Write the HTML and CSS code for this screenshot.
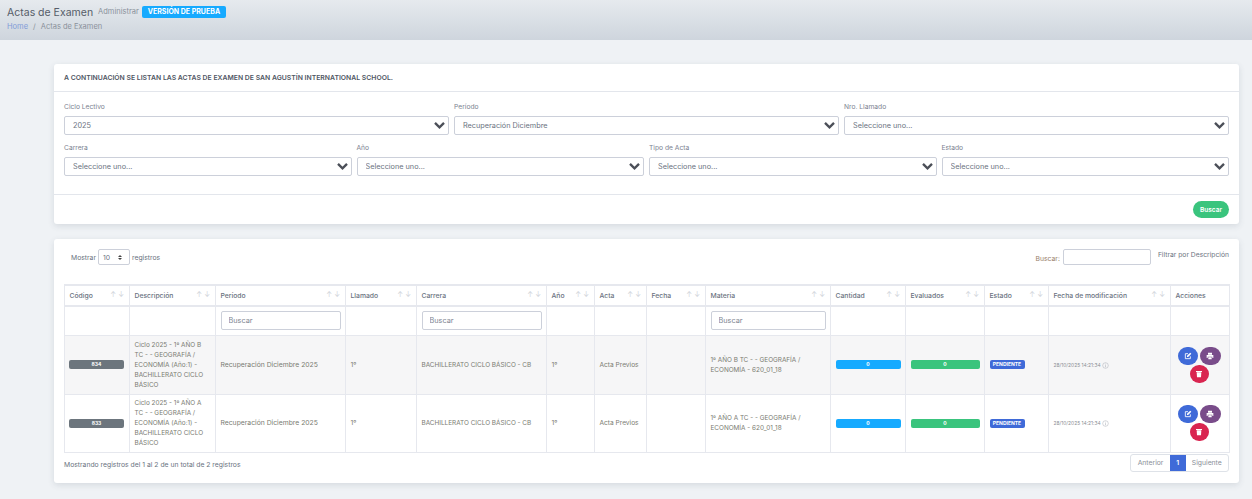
FILE: index.html
```html
<!DOCTYPE html>
<html lang="es">
<head>
<meta charset="utf-8">
<title>Actas de Examen</title>
<link rel="stylesheet" href="styles.css">
</head>
<body>
<svg class="sprite" width="0" height="0" aria-hidden="true">
  <symbol id="chev" viewBox="0 0 14 10"><path d="M2 2l5 5 5-5" fill="none" stroke="currentColor" stroke-width="2.6"/></symbol>
  <symbol id="edit" viewBox="0 0 12 12"><path d="M6 2.500H2v7.500h7.500V6.500" fill="none" stroke="currentColor" stroke-width="1.300"/><path d="M4.500 5.800L9.300 1l1.700 1.700-4.800 4.800H4.500z" fill="currentColor"/></symbol>
  <symbol id="print" viewBox="0 0 12 12"><path d="M3 1h6v3H3zM1 4.500h10V9H9.500V7h-7v2H1zM3.500 8h5v3h-5z" fill="currentColor"/></symbol>
  <symbol id="trash" viewBox="0 0 12 12"><path d="M1.500 1.500h9v1.500h-9zM2.500 3.500h7L9 11H3z" fill="currentColor"/></symbol>
  <symbol id="info" viewBox="0 0 10 10"><circle cx="5" cy="5" r="4" fill="none" stroke="currentColor" stroke-width=".7"/><path d="M5 4.500v3M5 2.500v1" stroke="currentColor" stroke-width=".8"/></symbol>
</svg>

<header class="topbar">
  <div class="title-row">
    <h1 class="title">Actas de Examen</h1>
    <span class="subtitle">Administrar</span>
    <span class="trial">VERSIÓN DE PRUEBA</span>
  </div>
  <nav class="crumbs"><a class="crumb-link">Home</a><span class="crumb-sep">/</span><span>Actas de Examen</span></nav>
</header>

<main class="content">
  <section class="card filters">
    <div class="card-head">A CONTINUACIÓN SE LISTAN LAS ACTAS DE EXAMEN DE SAN AGUSTÍN INTERNATIONAL SCHOOL.</div>
    <div class="card-body">
      <div class="grid-3">
        <label class="field"><span class="field-label">Ciclo Lectivo</span><span class="select-wrap"><select class="select"><option>2025</option></select><svg class="chev"><use href="#chev"/></svg></span></label>
        <label class="field"><span class="field-label">Período</span><span class="select-wrap"><select class="select"><option>Recuperación Diciembre</option></select><svg class="chev"><use href="#chev"/></svg></span></label>
        <label class="field"><span class="field-label">Nro. Llamado</span><span class="select-wrap"><select class="select"><option>Seleccione uno...</option></select><svg class="chev"><use href="#chev"/></svg></span></label>
      </div>
      <div class="grid-4">
        <label class="field"><span class="field-label">Carrera</span><span class="select-wrap"><select class="select"><option>Seleccione uno...</option></select><svg class="chev"><use href="#chev"/></svg></span></label>
        <label class="field"><span class="field-label">Año</span><span class="select-wrap"><select class="select"><option>Seleccione uno...</option></select><svg class="chev"><use href="#chev"/></svg></span></label>
        <label class="field"><span class="field-label">Tipo de Acta</span><span class="select-wrap"><select class="select"><option>Seleccione uno...</option></select><svg class="chev"><use href="#chev"/></svg></span></label>
        <label class="field"><span class="field-label">Estado</span><span class="select-wrap"><select class="select"><option>Seleccione uno...</option></select><svg class="chev"><use href="#chev"/></svg></span></label>
      </div>
    </div>
    <div class="card-foot"><button class="btn-search">Buscar</button></div>
  </section>

  <section class="card list">
    <div class="list-tools">
      <div class="length">Mostrar <span class="length-box">10<span class="spin"><i class="up"></i><i class="down"></i></span></span> registros</div>
      <div class="search-tools">
        <span class="search-label">Buscar:</span><input class="search-input" type="text" aria-label="Buscar">
        <span class="filter-note">Filtrar por Descripción</span>
      </div>
    </div>
    <table class="data">
      <colgroup>
        <col class="c1"><col class="c2"><col class="c3"><col class="c4"><col class="c5"><col class="c6"><col class="c7"><col class="c8"><col class="c9"><col class="c10"><col class="c11"><col class="c12"><col class="c13"><col class="c14">
      </colgroup>
      <thead>
        <tr class="head">
          <th>Código<span class="sort">↑↓</span></th>
          <th>Descripción<span class="sort">↑↓</span></th>
          <th>Período<span class="sort">↑↓</span></th>
          <th>Llamado<span class="sort">↑↓</span></th>
          <th>Carrera<span class="sort">↑↓</span></th>
          <th>Año<span class="sort">↑↓</span></th>
          <th>Acta<span class="sort">↑↓</span></th>
          <th>Fecha<span class="sort">↑↓</span></th>
          <th>Materia<span class="sort">↑↓</span></th>
          <th>Cantidad<span class="sort">↑↓</span></th>
          <th>Evaluados<span class="sort">↑↓</span></th>
          <th>Estado<span class="sort">↑↓</span></th>
          <th>Fecha de modificación<span class="sort">↑↓</span></th>
          <th>Acciones</th>
        </tr>
        <tr class="filter-row">
          <td></td><td></td>
          <td><input class="col-search" placeholder="Buscar"></td>
          <td></td>
          <td><input class="col-search" placeholder="Buscar"></td>
          <td></td><td></td><td></td>
          <td><input class="col-search" placeholder="Buscar"></td>
          <td></td><td></td><td></td><td></td><td></td>
        </tr>
      </thead>
      <tbody>
        <tr class="odd">
          <td><span class="badge grey">834</span></td>
          <td class="caps desc">Ciclo 2025 - 1º AÑO B TC - - GEOGRAFÍA / ECONOMÍA (Año:1) - BACHILLERATO CICLO BÁSICO</td>
          <td>Recuperación Diciembre 2025</td>
          <td>1º</td>
          <td class="caps">BACHILLERATO CICLO BÁSICO - CB</td>
          <td>1º</td>
          <td class="nowrap">Acta Previos</td>
          <td></td>
          <td class="caps">1º AÑO B TC - - GEOGRAFÍA / ECONOMÍA - 620_01_18</td>
          <td><span class="badge blue">0</span></td>
          <td><span class="badge green">0</span></td>
          <td><span class="badge state">PENDIENTE</span></td>
          <td class="stamp">28/10/2025 14:21:34 <svg class="info"><use href="#info"/></svg></td>
          <td class="actions"><span class="act edit"><svg><use href="#edit"/></svg></span><span class="act print"><svg><use href="#print"/></svg></span><span class="act del"><svg><use href="#trash"/></svg></span></td>
        </tr>
        <tr>
          <td><span class="badge grey">833</span></td>
          <td class="caps desc">Ciclo 2025 - 1º AÑO A TC - - GEOGRAFÍA / ECONOMÍA (Año:1) - BACHILLERATO CICLO BÁSICO</td>
          <td>Recuperación Diciembre 2025</td>
          <td>1º</td>
          <td class="caps">BACHILLERATO CICLO BÁSICO - CB</td>
          <td>1º</td>
          <td class="nowrap">Acta Previos</td>
          <td></td>
          <td class="caps">1º AÑO A TC - - GEOGRAFÍA / ECONOMÍA - 620_01_18</td>
          <td><span class="badge blue">0</span></td>
          <td><span class="badge green">0</span></td>
          <td><span class="badge state">PENDIENTE</span></td>
          <td class="stamp">28/10/2025 14:21:34 <svg class="info"><use href="#info"/></svg></td>
          <td class="actions"><span class="act edit"><svg><use href="#edit"/></svg></span><span class="act print"><svg><use href="#print"/></svg></span><span class="act del"><svg><use href="#trash"/></svg></span></td>
        </tr>
      </tbody>
    </table>
    <div class="list-foot">
      <div class="info-text">Mostrando registros del 1 al 2 de un total de 2 registros</div>
      <div class="pager"><span class="page">Anterior</span><span class="page current">1</span><span class="page">Siguiente</span></div>
    </div>
  </section>
</main>
</body>
</html>
```
FILE: styles.css
```css
* { box-sizing: border-box; }
html, body { margin: 0; height: 499px; overflow: hidden; }
body {
  background: #eff2f5;
  font-family: "Inter", "Open Sans", sans-serif;
  font-size: 7.500px;
  color: #6a7280;
}
.sprite { position: absolute; }

.topbar {
  height: 40px;
  background: linear-gradient(180deg, #e6eaee 0%, #ced5dd 100%);
  padding: 5px 7px 0;
}
.title-row { display: flex; align-items: center; height: 14px; gap: 5px; }
.title { margin: 0; font-size: 10.500px; font-weight: 400; color: #555c68; }
.subtitle { font-size: 7.500px; color: #8a919b; position: relative; top: -1px; }
.trial {
  background: #16aaff;
  color: #fff;
  font-size: 7px;
  font-weight: 700;
  padding: 0 6px;
  height: 12px;
  line-height: 12px;
  border-radius: 2px;
  margin-left: -2px;
}
.crumbs { display: flex; gap: 5px; margin-top: 3px; font-size: 7.500px; color: #8a919b; }
.crumb-link { color: #7f9bd8; }

.content {
  padding: 24px 13px 0 54px;
  display: flex;
  flex-direction: column;
  gap: 15px;
}
.card {
  background: #fff;
  border-radius: 3px;
  box-shadow: 0 2px 6px rgba(60, 70, 90, .14);
}
.filters { height: 160px; display: flex; flex-direction: column; }
.card-head {
  height: 28px;
  padding: 0 10px;
  line-height: 27px;
  font-size: 6.850px;
  font-weight: 600;
  color: #4f5663;
  border-bottom: 1px solid #e3e6ec;
}
.card-body { flex: 1; padding: 9px 10px 0; display: flex; flex-direction: column; gap: 7px; }
.grid-3 { display: grid; grid-template-columns: repeat(3, 1fr); gap: 5px; }
.grid-4 { display: grid; grid-template-columns: repeat(4, 1fr); gap: 5px; }
.field { display: flex; flex-direction: column; min-width: 0; }
.field-label { height: 15px; line-height: 12px; font-size: 6.700px; color: #7b8290; }
.select-wrap { position: relative; display: block; }
.select {
  display: block;
  width: 100%;
  height: 19px;
  appearance: none;
  background: #fff;
  border: 1px solid #ccd0da;
  border-radius: 2px;
  padding: 0 8px;
  font: inherit;
  font-size: 7.300px;
  color: #6a7280;
}
.chev { position: absolute; right: 3px; top: 5px; width: 13px; height: 9px; color: #4b4f58; pointer-events: none; }
.card-foot {
  height: 30px;
  border-top: 1px solid #e3e6ec;
  display: flex;
  justify-content: flex-end;
  align-items: center;
  padding: 0 10px;
}
.btn-search {
  width: 36px;
  height: 17px;
  border: 0;
  border-radius: 9px;
  background: #3ac47d;
  color: #fff;
  font: 600 6.500px "Inter", sans-serif;
  padding: 0;
}

.list { height: 244px; padding: 0 10px; font-size: 6.800px; }
.list-tools { display: flex; justify-content: space-between; height: 46px; padding-top: 10px; }
.length { display: flex; align-items: center; gap: 2px; height: 16px; padding-left: 7px; }
.length-box {
  width: 32px;
  height: 16px;
  border: 1px solid #ccd0da;
  border-radius: 2px;
  padding: 0 4px;
  line-height: 13px;
  display: flex;
  justify-content: space-between;
  align-items: center;
}
.spin { display: flex; flex-direction: column; gap: 1px; margin-right: 3px; }
.up, .down { display: block; width: 0; height: 0; border-left: 2px solid transparent; border-right: 2px solid transparent; }
.up { border-bottom: 2px solid #444; }
.down { border-top: 2px solid #444; }
.search-tools { display: flex; align-items: flex-start; }
.search-label { margin-top: 5px; margin-right: 3px; color: #98806a; }
.search-input { width: 88px; height: 16px; border: 1px solid #ccd0da; border-radius: 2px; background: #fff; }
.filter-note { margin-left: 7px; margin-top: 1px; font-size: 6.750px; color: #6d7482; }

.data {
  width: 1165px;
  table-layout: fixed;
  border-collapse: collapse;
  font-size: 6.800px;
  margin-top: -1px;
}
.c1 { width: 65px; } .c2 { width: 86px; } .c3 { width: 130px; } .c4 { width: 71px; }
.c5 { width: 130px; } .c6 { width: 48px; } .c7 { width: 52px; } .c8 { width: 59px; }
.c9 { width: 125px; } .c10 { width: 75px; } .c11 { width: 79px; } .c12 { width: 64px; }
.c13 { width: 122px; } .c14 { width: 59px; }
.data th, .data td { border: 1px solid #e6e8ee; padding: 0 4.500px; vertical-align: middle; text-align: left; }
.data th {
  height: 21px;
  border-width: 2px 1px;
  font-weight: 500;
  color: #6a7280;
  position: relative;
}
.sort { position: absolute; right: 3px; top: 4px; color: #d0d3da; font-size: 7px; font-weight: 400; letter-spacing: 2px; }
.filter-row td { height: 29px; }
.col-search {
  display: block;
  width: 100%;
  height: 19px;
  border: 1px solid #ccd0da;
  border-radius: 2px;
  padding: 0 7px;
  font: 400 7.300px "Inter", sans-serif;
}
.col-search::placeholder { color: #7d8490; opacity: 1; }
tbody tr { height: 59px; }
tbody tr:last-child { height: 58px; }
.data tbody td { line-height: 10px; color: #7a7c72; }
.data tbody .caps { font-size: 6.400px; }
.data tbody .desc { padding-right: 8px; }
.data tbody .nowrap { white-space: nowrap; font-size: 6.600px; }
.odd td { background: #f6f6f7; }
.badge {
  display: block;
  height: 9px;
  line-height: 8px;
  border-radius: 2px;
  color: #fff;
  font-size: 5px;
  font-weight: 700;
  text-align: center;
}
.grey { background: #6c757d; margin-left: -.5px; margin-right: .5px; }
.blue { background: #16aaff; }
.green { background: #3ac47d; }
.state { background: #3f6ad8; width: 35px; }
.data tbody .stamp { font-size: 4.900px; white-space: nowrap; color: #8a8d94; }
.info { width: 7px; height: 7px; color: #a8adb5; vertical-align: middle; }
.data .actions { text-align: center; padding: 0 3px 0 1px; line-height: 0; }
.act {
  display: inline-flex;
  align-items: center;
  justify-content: center;
  height: 18px;
  border-radius: 9px;
  margin: 0 1px;
  color: #fff;
  vertical-align: top;
}
.act svg { width: 8px; height: 8px; }
.edit { width: 20px; background: #3f6ad8; }
.print { width: 21px; background: #794c8a; }
.del { width: 19px; height: 18px; background: #d92550; }
.list-foot { display: flex; justify-content: space-between; align-items: flex-start; margin-top: 1px; }
.info-text { margin-top: 6px; font-size: 6.800px; color: #6a7280; }
.pager {
  display: flex;
  height: 18px;
  border: 1px solid #dee2e8;
  border-radius: 3px;
  font-size: 6.800px;
  line-height: 16px;
}
.page { padding: 0 6.250px; color: #8a8f98; }
.current { background: #3f6ad8; color: #fff; font-weight: 600; padding: 0 6.500px; }
```
